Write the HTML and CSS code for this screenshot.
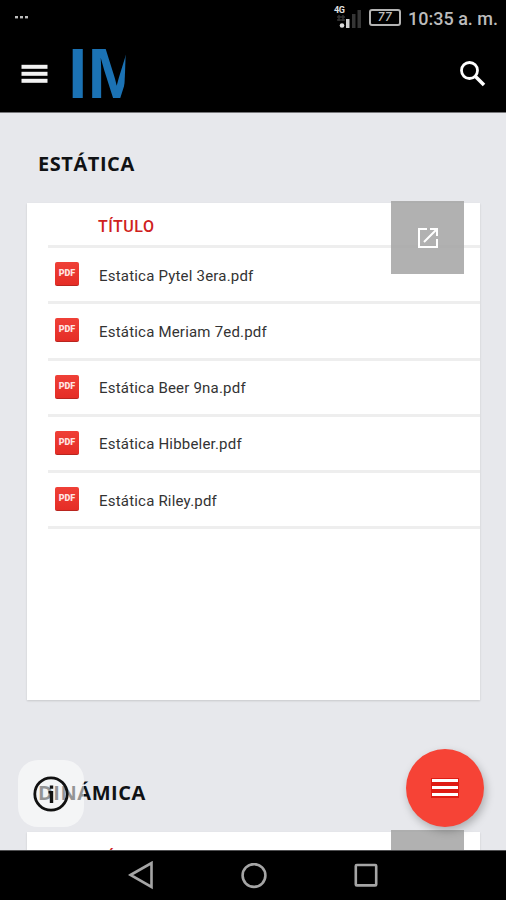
FILE: index.html
```html
<!DOCTYPE html>
<html lang="es">
<head>
<meta charset="utf-8">
<title>Estática</title>
<link rel="stylesheet" href="styles.css">
</head>
<body>
<div class="screen">
  <header class="top">
    <div class="status">
      <svg class="dots" width="16" height="4" viewBox="0 0 16 4" fill="#bdbdbd"><rect x="1" y="0" width="3" height="2.4"/><rect x="6" y="0" width="3" height="2.4"/><rect x="11" y="0" width="3" height="2.4"/></svg>
      <div class="signal">
        <span class="net">4G</span>
        <svg width="28" height="23" viewBox="0 0 28 23"><path d="M3 11h8M3 14h8M5 9v6M9 9v6" stroke="#333" stroke-width="1.5"/><circle cx="8" cy="19.5" r="2.3" fill="#ddd"/><rect x="12" y="13" width="3.5" height="9" fill="#d0d0d0"/><rect x="18" y="8" width="3.5" height="14" fill="#353535"/><rect x="23.5" y="4" width="3.5" height="18" fill="#353535"/></svg>
      </div>
      <div class="battery">77</div>
      <span class="time">10:35 a. m.</span>
    </div>
    <div class="appbar">
      <svg class="menu" width="27" height="20" viewBox="0 0 27 20" fill="#f2f2f2"><rect x=".5" y=".8" width="26" height="4"/><rect x=".5" y="7.8" width="26" height="4"/><rect x=".5" y="14.8" width="26" height="4"/></svg>
      <div class="logo">IM</div>
      <svg class="search" width="27" height="27" viewBox="0 0 27 27" fill="none" stroke="#fff"><circle cx="10.5" cy="9.5" r="8" stroke-width="2.8"/><path d="M16 15 25 24" stroke-width="3.6"/></svg>
    </div>
  </header>

  <main class="content">
    <h2 class="heading">ESTÁTICA</h2>
    <section class="card">
      <div class="table">
        <div class="row head"><span class="title">TÍTULO</span></div>
        <div class="row"><span class="pdf">PDF</span><span class="name">Estatica Pytel 3era.pdf</span></div>
        <div class="row"><span class="pdf">PDF</span><span class="name">Estática Meriam 7ed.pdf</span></div>
        <div class="row"><span class="pdf">PDF</span><span class="name">Estática Beer 9na.pdf</span></div>
        <div class="row"><span class="pdf">PDF</span><span class="name">Estática Hibbeler.pdf</span></div>
        <div class="row"><span class="pdf">PDF</span><span class="name">Estática Riley.pdf</span></div>
      </div>
      <div class="open"><svg width="22" height="22" viewBox="0 0 22 22" fill="none" stroke="#fff" stroke-width="2"><path d="M10 2H2v18h18v-8M13 2h7v7M19.5 2.5 7 15"/></svg></div>
    </section>
    <h2 class="heading second">DINÁMICA</h2>
    <section class="card">
      <div class="table"><div class="row head lower"><span class="title">TÍTULO</span></div></div>
      <div class="open"></div>
    </section>
    <div class="info"><svg width="38" height="38" viewBox="0 0 38 38"><circle cx="19" cy="19" r="16.2" fill="none" stroke="#111" stroke-width="2.8"/><path d="M17.8 10.5h3.4v3.2h-3.4zM16.5 16h4.7v12h-3.4v-9.5h-1.3z" fill="#111"/></svg></div>
    <div class="fab"><svg width="28" height="22" viewBox="0 0 28 22"><path d="M0 1h28v20H0z" fill="#df1c14"/><path d="M1 3.5h26M1 10.5h26M1 17.5h26" stroke="#fff" stroke-width="3"/></svg></div>
  </main>

  <nav class="nav">
    <svg width="26" height="30" viewBox="0 0 26 30"><path d="M2.5 14 23.5 2v24z"/></svg>
    <svg width="26" height="26" viewBox="0 0 26 26"><circle cx="13" cy="12.5" r="11.4"/></svg>
    <svg width="26" height="26" viewBox="0 0 26 26"><rect x="2.8" y="2" width="20.4" height="20.4" rx="1"/></svg>
  </nav>
</div>
</body>
</html>
```
FILE: styles.css
```css
* { box-sizing: border-box; }
body { margin: 0; font-family: Roboto, "Liberation Sans", sans-serif; }
.screen { width: 506px; height: 900px; display: flex; flex-direction: column; overflow: hidden; background: #e7e8ec; }

.top { height: 113px; background: #000; flex: none; border-bottom: 1px solid #77777a; }
.status { height: 36px; display: flex; align-items: center; padding: 0 8px 0 14px; color: #bcbcbc; }
.signal { position: relative; width: 28px; height: 23px; margin: -2px 7px 0 auto; }
.signal svg { display: block; }
.net { position: absolute; left: 0; top: 0; font: bold 9px/9px Roboto, sans-serif; letter-spacing: -.5px; color: #e0e0e0; }
.battery { width: 32px; height: 17px; margin: -1px 7px 0 0; border: 2px solid #b3b3b3; border-radius: 3px; font: italic 500 12px/13px Roboto, sans-serif; letter-spacing: .6px; text-align: center; color: #bbb; }
.time { font-size: 18px; font-weight: 500; white-space: nowrap; }
.appbar { height: 76px; display: flex; align-items: center; padding: 0 20px 0 21px; }
.logo { width: 80px; height: 60px; margin-left: 20px; font: bold 70px/60px "Liberation Sans", sans-serif; color: #1b72b4; white-space: nowrap; clip-path: polygon(0 0, 58px 0, 57px 29px, 56px 50px, 52px 60px, 0 60px); }
.search { margin-left: auto; }

.content { position: relative; flex: 1; overflow: hidden; padding: 39px 26px 0 27px; }
.heading { margin: 0 0 0 11px; height: 24px; font: bold 20px/24px "Open Sans", sans-serif; letter-spacing: .55px; color: #101214; white-space: nowrap; }
.second { margin-top: 81px; }
.card { position: relative; height: 497px; margin-top: 27px; background: #fff; box-shadow: 0 1px 2px rgba(0,0,0,.14); }
.table { padding-left: 21px; }
.row { height: 56.25px; display: flex; align-items: center; border-bottom: 3px solid #eee; }
.head { height: 45px; padding-left: 50px; }
.lower { padding-top: 4px; }
.title { padding-top: 4px; font-size: 16px; font-weight: 500; letter-spacing: .5px; color: #cf211c; }
.pdf { width: 24px; height: 24px; margin: -1px 20px 0 7px; border-radius: 2px; background: linear-gradient(#ef4037, #e52d26); border-bottom: 1px solid #b9251f; font: 900 9px/22px Roboto, sans-serif; color: #ffe3e1; text-align: center; }
.name { padding-top: 2px; font-size: 15px; color: #333; letter-spacing: .2px; white-space: nowrap; }
.open { position: absolute; right: 16px; top: -2px; width: 73px; height: 73px; display: flex; align-items: center; justify-content: center; background: rgba(163,163,163,.85); }
.info { position: absolute; left: 18px; top: 647px; width: 66px; height: 67px; border-radius: 20px; background: rgba(255,255,255,.55); display: flex; align-items: center; justify-content: center; }
.fab { position: absolute; left: 406px; top: 636px; width: 78px; height: 78px; border-radius: 50%; background: #f64336; box-shadow: 2px 4px 8px rgba(0,0,0,.25); display: flex; align-items: center; justify-content: center; }

.nav { height: 50px; flex: none; background: #000; border-top: 1px solid #505052; display: flex; align-items: center; justify-content: space-between; padding: 0 127px 0 128px; }
.nav svg { fill: none; stroke: #a5a5a5; stroke-width: 2.6; }
```
